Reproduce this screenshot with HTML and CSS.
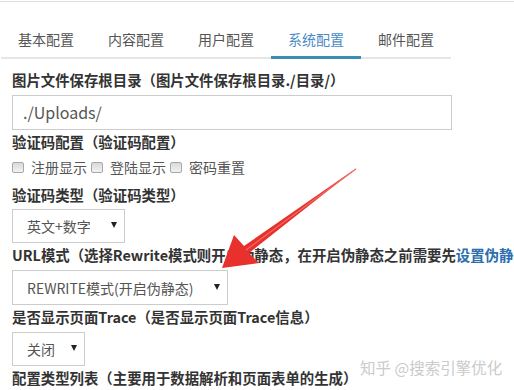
FILE: index.html
```html
<!DOCTYPE html>
<html lang="zh-CN">
<head>
  <meta charset="UTF-8" />
  <title>系统配置</title>
  <link rel="stylesheet" href="styles.css">
</head>
<body>

  <div class="topline"></div>

  <ul class="tabs">
    <li class="tab">基本配置</li>
    <li class="tab">内容配置</li>
    <li class="tab">用户配置</li>
    <li class="tab active">系统配置</li>
    <li class="tab">邮件配置</li>
  </ul>

  <div class="form">
    <div class="label">图片文件保存根目录（图片文件保存根目录./目录/）</div>
    <div class="input">./Uploads/</div>

    <div class="label">验证码配置（验证码配置）</div>
    <div class="checks">
      <span class="box"></span><span class="check-text">注册显示</span>
      <span class="box"></span><span class="check-text">登陆显示</span>
      <span class="box"></span><span class="check-text">密码重置</span>
    </div>

    <div class="label">验证码类型（验证码类型）</div>
    <div class="select select-small">英文+数字<span class="caret"></span></div>

    <div class="label">URL模式（选择Rewrite模式则开启伪静态，在开启伪静态之前需要先<span class="link">设置伪静态</span></div>
    <div class="select select-wide">REWRITE模式(开启伪静态)<span class="caret"></span></div>

    <div class="label">是否显示页面Trace（是否显示页面Trace信息）</div>
    <div class="select select-tiny">关闭<span class="caret"></span></div>

    <div class="label">配置类型列表（主要用于数据解析和页面表单的生成）</div>
  </div>

  <!-- screenshot annotation -->
  <svg class="arrow" width="514" height="390" viewBox="0 0 514 390">
    <polygon points="358,167 249,253 259,263 222,268 234,235 244,246" fill="#e8302d"/>
    <polyline points="356,169 246,250" stroke="#f26a62" stroke-width="1.2" fill="none"/>
  </svg>

  <div class="watermark">知乎 @搜索引擎优化</div>

</body>
</html>
```

FILE: styles.css
```css
* {
  margin: 0;
  padding: 0;
  box-sizing: border-box;
}

body {
  width: 514px;
  height: 390px;
  overflow: hidden;
  position: relative;
  background: #fff;
  font-family: "Noto Sans CJK SC", "Microsoft YaHei", sans-serif;
  font-size: 14px;
  color: #333;
}

.topline {
  height: 1px;
  margin-top: 1px;
  background: #ddd;
}

.tabs {
  list-style: none;
  display: flex;
  width: 450px;
  margin-left: 1px;
  border-bottom: 2px solid #e6e6e6;
}

.tab {
  width: 90px;
  padding: 27px 0 8px;
  line-height: 20px;
  text-align: center;
  color: #555;
  margin-bottom: -2px;
  border-bottom: 2px solid transparent;
}

.tab.active {
  color: #4a8bc6;
  border-bottom: 3px solid #3b8db6;
  padding-bottom: 7px;
}

.form {
  padding: 11px 0 0 12px;
}

.label {
  font-size: 14.4px;
  font-weight: bold;
  line-height: 20px;
  white-space: nowrap;
  margin-bottom: 5px;
}

.link {
  color: #2b6eae;
}

.input {
  width: 440px;
  height: 35px;
  border: 1px solid #ccc;
  padding-left: 10px;
  line-height: 33px;
  font-size: 16px;
  color: #555;
  margin-bottom: 2px;
}

.checks {
  display: flex;
  align-items: center;
  height: 20px;
  margin: 2px 0 8px;
  color: #555;
}

.box {
  width: 12px;
  height: 11px;
  border: 1px solid #a8a8a8;
  border-radius: 2px;
  background: linear-gradient(#d9d9d9, #f2f2f2);
  margin-right: 7px;
}

.check-text {
  margin-right: 4px;
}

.select {
  display: flex;
  align-items: center;
  justify-content: space-between;
  height: 34px;
  border: 1px solid #ccc;
  padding: 0 7px 0 14px;
  color: #555;
  margin-bottom: 2px;
}

.select-small {
  width: 113px;
  margin-top: -1px;
}

.select-wide {
  width: 216px;
  height: 35px;
  margin-top: 1px;
}

.select-tiny {
  width: 73px;
  margin-top: 1px;
}

.caret {
  width: 0;
  height: 0;
  border-left: 3px solid transparent;
  border-right: 3px solid transparent;
  border-top: 6px solid #222;
  margin-top: -2px;
}

.arrow {
  position: absolute;
  top: 0;
  left: 0;
  pointer-events: none;
}

.watermark {
  position: absolute;
  left: 360px;
  top: 357px;
  font-size: 15.5px;
  line-height: 20px;
  color: #cbcbcb;
  white-space: nowrap;
}
```
